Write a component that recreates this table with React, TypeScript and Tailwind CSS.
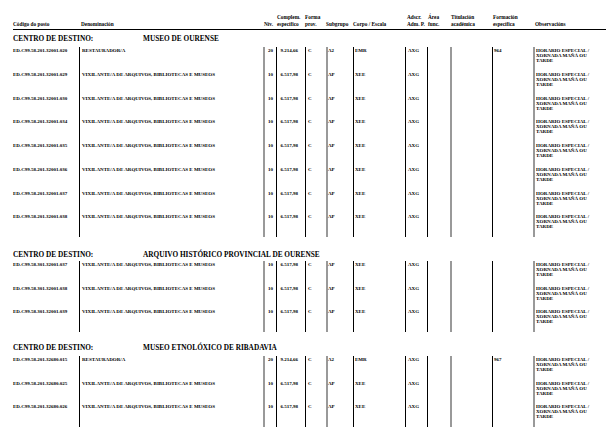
import React from 'react'

type Row = {
  code: string
  name: string
  niv: string
  comp: string
  forma: string
  subgrupo: string
  corpo: string
  adscr: string
  formacion?: string
}

type Section = {
  centro: string
  rows: Row[]
  headTop: string
  gap: string
}

const GRID =
  'grid grid-cols-[66px_184px_13px_29px_21px_27px_52px_22px_23px_42px_41px_73px]'

const vix = (code: string): Row => ({
  code,
  name: 'VIXILANTE/A DE ARQUIVOS, BIBLIOTECAS E MUSEOS',
  niv: '10',
  comp: '6.517,98',
  forma: 'C',
  subgrupo: 'AP',
  corpo: 'XEE',
  adscr: 'AXG'
})

const rest = (code: string, formacion: string): Row => ({
  code,
  name: 'RESTAURADOR/A',
  niv: '20',
  comp: '9.214,66',
  forma: 'C',
  subgrupo: 'A2',
  corpo: 'EMR',
  adscr: 'AXG',
  formacion
})

const sections: Section[] = [
  {
    centro: 'MUSEO DE OURENSE',
    headTop: 'mt-[5px]',
    gap: 'mt-[4px]',
    rows: [
      rest('ED.C99.58.201.32001.020', '964'),
      vix('ED.C99.58.201.32001.029'),
      vix('ED.C99.58.201.32001.030'),
      vix('ED.C99.58.201.32001.034'),
      vix('ED.C99.58.201.32001.035'),
      vix('ED.C99.58.201.32001.036'),
      vix('ED.C99.58.201.32001.037'),
      vix('ED.C99.58.201.32001.038')
    ]
  },
  {
    centro: 'ARQUIVO HISTÓRICO PROVINCIAL DE OURENSE',
    headTop: 'mt-[14px]',
    gap: 'mt-[2px]',
    rows: [
      vix('ED.C99.58.301.32001.037'),
      vix('ED.C99.58.301.32001.038'),
      vix('ED.C99.58.301.32001.039')
    ]
  },
  {
    centro: 'MUSEO ETNOLÓXICO DE RIBADAVIA',
    headTop: 'mt-[12px]',
    gap: 'mt-[4px]',
    rows: [
      rest('ED.C99.58.201.32680.015', '967'),
      vix('ED.C99.58.201.32680.025'),
      vix('ED.C99.58.201.32680.026')
    ]
  }
]

// solid rules and the paler double rules of the printed form
const dark = 'border-l border-black'
const gray = 'border-l-2 border-[#999]'

const DataRow = ({ r }: { r: Row }) => (
  <div className={`${GRID} h-[23.7px] text-[5px] leading-[5px]`}>
    <div className="pt-[1px] whitespace-nowrap">{r.code}</div>
    <div className={`${dark} pl-[2px] pt-[1px] whitespace-nowrap`}>{r.name}</div>
    <div className={`${gray} pt-[1px] text-center`}>{r.niv}</div>
    <div className={`${dark} pt-[1px] pr-[7px] text-right`}>{r.comp}</div>
    <div className={`${dark} pl-[2px] pt-[1px]`}>{r.forma}</div>
    <div className={`${gray} pt-[1px]`}>{r.subgrupo}</div>
    <div className={`${dark} pl-[1px] pt-[1px]`}>{r.corpo}</div>
    <div className={`${dark} pl-[2px] pt-[1px]`}>{r.adscr}</div>
    <div className={dark}></div>
    <div className={gray}></div>
    <div className={`${dark} pl-[1px] pt-[1px]`}>{r.formacion}</div>
    <div className={`${gray} pl-[1px] pt-[1px] whitespace-nowrap`}>
      HORARIO ESPECIAL /<br />
      XORNADA MAÑÁ OU<br />
      TARDE
    </div>
  </div>
)

export default function App() {
  return (
    <div
      className="w-[615px] h-[439px] overflow-hidden bg-white text-black font-bold"
      style={{ fontFamily: '"Liberation Serif", "Times New Roman", serif' }}
    >
      <div className="pl-[13px] pr-[9px] pt-[14px]">
        <div
          className={`${GRID} items-end border-b border-black pb-[2px] text-[5.3px] leading-[6.7px]`}
        >
          <div>Código do posto</div>
          <div className="pl-[2px]">Denominación</div>
          <div className="pl-[1px]">Nív.</div>
          <div className="pl-[1px]">
            Complem.
            <br />
            específico
          </div>
          <div>
            Forma
            <br />
            prov.
          </div>
          <div>Subgrupo</div>
          <div className="whitespace-nowrap">Corpo / Escala</div>
          <div className="pl-[2px] whitespace-nowrap">
            Adscr.
            <br />
            Adm. P.
          </div>
          <div className="pl-[1px]">
            Área
            <br />
            func.
          </div>
          <div className="pl-[1px]">
            Titulación
            <br />
            académica
          </div>
          <div className="pl-[1px]">
            Formación
            <br />
            específica
          </div>
          <div className="pl-[2px]">Observacións</div>
        </div>

        {sections.map((s) => (
          <div key={s.centro}>
            <div className={`${s.headTop} flex h-[8px] items-center text-[7.3px] leading-[8px]`}>
              <div className="w-[130px]">CENTRO DE DESTINO:</div>
              <div>{s.centro}</div>
            </div>
            <div className={s.gap}>
              {s.rows.map((r) => (
                <DataRow key={r.code} r={r} />
              ))}
            </div>
          </div>
        ))}
      </div>
    </div>
  )
}
